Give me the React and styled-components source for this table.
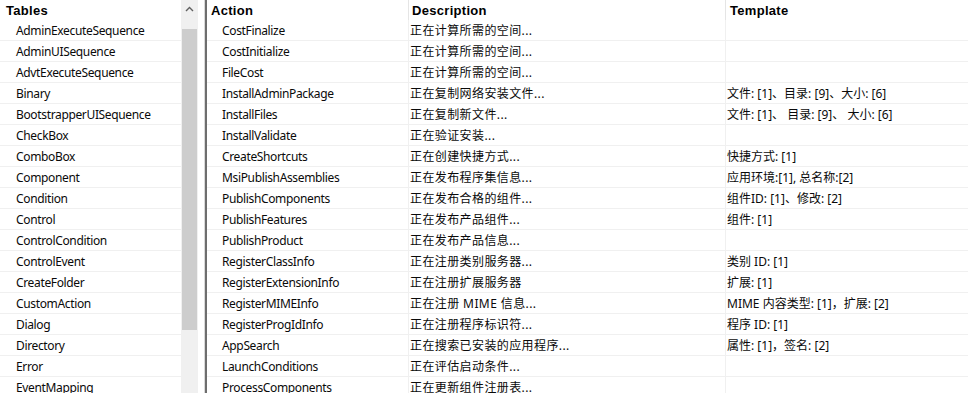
import styled, { createGlobalStyle } from "styled-components";

// Dados das tabelas
const tables = [
  "AdminExecuteSequence",
  "AdminUISequence",
  "AdvtExecuteSequence",
  "Binary",
  "BootstrapperUISequence",
  "CheckBox",
  "ComboBox",
  "Component",
  "Condition",
  "Control",
  "ControlCondition",
  "ControlEvent",
  "CreateFolder",
  "CustomAction",
  "Dialog",
  "Directory",
  "Error",
  "EventMapping",
];

const actions = [
  ["CostFinalize", "正在计算所需的空间...", ""],
  ["CostInitialize", "正在计算所需的空间...", ""],
  ["FileCost", "正在计算所需的空间...", ""],
  ["InstallAdminPackage", "正在复制网络安装文件...", "文件: [1]、目录: [9]、大小: [6]"],
  ["InstallFiles", "正在复制新文件...", "文件: [1]、 目录: [9]、 大小: [6]"],
  ["InstallValidate", "正在验证安装...", ""],
  ["CreateShortcuts", "正在创建快捷方式...", "快捷方式: [1]"],
  ["MsiPublishAssemblies", "正在发布程序集信息...", "应用环境:[1], 总名称:[2]"],
  ["PublishComponents", "正在发布合格的组件...", "组件ID: [1]、修改: [2]"],
  ["PublishFeatures", "正在发布产品组件...", "组件: [1]"],
  ["PublishProduct", "正在发布产品信息...", ""],
  ["RegisterClassInfo", "正在注册类别服务器...", "类别 ID: [1]"],
  ["RegisterExtensionInfo", "正在注册扩展服务器", "扩展: [1]"],
  ["RegisterMIMEInfo", "正在注册 MIME 信息...", "MIME 内容类型: [1]，扩展: [2]"],
  ["RegisterProgIdInfo", "正在注册程序标识符...", "程序 ID: [1]"],
  ["AppSearch", "正在搜索已安装的应用程序...", "属性: [1]，签名: [2]"],
  ["LaunchConditions", "正在评估启动条件...", ""],
  ["ProcessComponents", "正在更新组件注册表...", ""],
];

const App = () => {
  return (
    <>
      <GlobalStyle />
      <Window>
        {/* Painel das tabelas */}
        <LeftPane>
          <TableList>
            <HeaderCell $pad={6}>Tables</HeaderCell>
            {tables.map((t) => (
              <ListRow key={t}>{t}</ListRow>
            ))}
          </TableList>
          <ScrollBar>
            <ArrowButton>
              <svg width="9" height="6" viewBox="0 0 9 6">
                <path d="M1 5 L4.5 1.5 L8 5" fill="none" stroke="#606060" strokeWidth="1.4" />
              </svg>
            </ArrowButton>
            <Track>
              <Thumb />
            </Track>
          </ScrollBar>
        </LeftPane>

        <Splitter />

        {/* Grade de ações */}
        <Grid>
          <HeaderCell $pad={4}>Action</HeaderCell>
          <HeaderCell $pad={3} $line>Description</HeaderCell>
          <HeaderCell $pad={4} $line>Template</HeaderCell>
          {actions.map(([a, d, t]) => (
            <Row key={a}>
              <Cell $pad={15} $spacing={-0.35}>{a}</Cell>
              <Cell $pad={1} $spacing={0.4} $line>{d}</Cell>
              <Cell $pad={1} $spacing={0} $line>{t}</Cell>
            </Row>
          ))}
        </Grid>
      </Window>
    </>
  );
};

const GlobalStyle = createGlobalStyle`
  body {
    margin: 0;
    background: #ffffff;
  }
`;

const Window = styled.div`
  display: flex;
  width: 968px;
  height: 393px;
  overflow: hidden;
  background: #ffffff;
  font-family: "Noto Sans", "Noto Sans CJK SC", sans-serif;
  font-size: 12px;
  color: #0a0a0a;
`;

const LeftPane = styled.div`
  display: flex;
  width: 198px;
  flex-shrink: 0;
`;

const TableList = styled.div`
  width: 181px;
  display: flex;
  flex-direction: column;
`;

const HeaderCell = styled.div`
  height: 20px;
  flex-shrink: 0;
  display: flex;
  align-items: center;
  padding-left: ${(p) => p.$pad}px;
  font-family: "Liberation Sans", Arial, sans-serif;
  font-weight: bold;
  font-size: 13px;
  letter-spacing: 0.3px;
  color: #000000;
  border-left: ${(p) => (p.$line ? "1px solid #e5e5e5" : "none")};
  white-space: nowrap;
`;

const ListRow = styled.div`
  height: 20px;
  flex-shrink: 0;
  display: flex;
  align-items: center;
  padding-left: 16px;
  letter-spacing: -0.35px;
  border-bottom: 1px solid #f0f0f0;
  white-space: nowrap;
`;

const ScrollBar = styled.div`
  width: 17px;
  display: flex;
  flex-direction: column;
  background: #f0f0f0;
`;

const ArrowButton = styled.div`
  height: 17px;
  display: flex;
  align-items: center;
  justify-content: center;
`;

const Track = styled.div`
  flex: 1;
  padding: 12px 1px 0;
`;

const Thumb = styled.div`
  height: 301px;
  background: #cdcdcd;
`;

const Splitter = styled.div`
  width: 7px;
  flex-shrink: 0;
  background: #ffffff;
  border-right: 2px solid #6e6e6e;
  box-shadow: inset -1px 0 0 #d9d9d9;
`;

const Grid = styled.div`
  flex: 1;
  display: grid;
  grid-template-columns: 201px 317px 1fr;
  grid-auto-rows: min-content;
  align-content: start;
`;

const Row = styled.div`
  display: contents;
`;

const Cell = styled.div`
  height: 20px;
  display: flex;
  align-items: center;
  padding-left: ${(p) => p.$pad}px;
  letter-spacing: ${(p) => p.$spacing}px;
  border-bottom: 1px solid #f0f0f0;
  border-left: ${(p) => (p.$line ? "1px solid #f0f0f0" : "none")};
  white-space: nowrap;
  overflow: hidden;
`;

export default App;
